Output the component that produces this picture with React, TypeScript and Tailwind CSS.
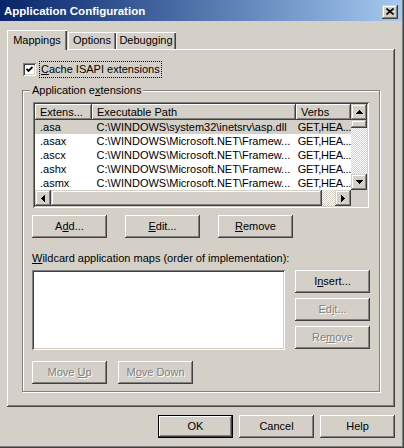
import React from 'react';

const raised =
  'shadow-[inset_-1px_-1px_#404040,inset_1px_1px_#fff,inset_-2px_-2px_#808080]';
const scrollRaised =
  'shadow-[inset_-1px_-1px_#404040,inset_1px_1px_#d4d0c8,inset_-2px_-2px_#808080,inset_2px_2px_#fff]';
const sunken =
  'shadow-[inset_1px_1px_#808080,inset_-1px_-1px_#fff,inset_2px_2px_#404040,inset_-2px_-2px_#d4d0c8]';
const dither =
  'bg-[repeating-conic-gradient(#fff_0_25%,#d4d0c8_0_50%)] bg-[length:2px_2px]';
const disabledText = 'text-[#808080] [text-shadow:1px_1px_0_#fff]';

const rows = [
  { ext: '.asa', path: 'C:\\WINDOWS\\system32\\inetsrv\\asp.dll', selected: true },
  { ext: '.asax', path: 'C:\\WINDOWS\\Microsoft.NET\\Framew...' },
  { ext: '.ascx', path: 'C:\\WINDOWS\\Microsoft.NET\\Framew...' },
  { ext: '.ashx', path: 'C:\\WINDOWS\\Microsoft.NET\\Framew...' },
  { ext: '.asmx', path: 'C:\\WINDOWS\\Microsoft.NET\\Framew...' },
];

const Arrow = ({ dir }: { dir: 'up' | 'down' | 'left' | 'right' }) => {
  const pts = {
    up: '3.5,0 7,4 0,4',
    down: '0,0 7,0 3.5,4',
    left: '4,0 4,7 0,3.5',
    right: '0,0 0,7 4,3.5',
  }[dir];
  const vertical = dir === 'up' || dir === 'down';
  return (
    <svg
      width={vertical ? 7 : 4}
      height={vertical ? 4 : 7}
      viewBox={vertical ? '0 0 7 4' : '0 0 4 7'}
      shapeRendering="crispEdges"
    >
      <polygon points={pts} fill="#000" />
    </svg>
  );
};

const ScrollBtn = ({ dir }: { dir: 'up' | 'down' | 'left' | 'right' }) => (
  <div className={`w-[16px] h-[16px] shrink-0 flex items-center justify-center bg-[#d4d0c8] ${scrollRaised}`}>
    <Arrow dir={dir} />
  </div>
);

const Btn = ({
  children,
  disabled,
  isDefault,
}: {
  children: React.ReactNode;
  disabled?: boolean;
  isDefault?: boolean;
}) => (
  <div
    className={`w-[75px] h-[23px] shrink-0 flex items-center justify-center bg-[#d4d0c8] ${raised} ${
      isDefault ? 'border border-black' : ''
    } ${disabled ? disabledText : 'text-black'}`}
  >
    <span className="whitespace-pre">{children}</span>
  </div>
);

const U = ({ children }: { children: React.ReactNode }) => <span className="underline">{children}</span>;

export default function App() {
  return (
    <div className="w-[404px] h-[448px] overflow-hidden bg-[#d4d0c8] pr-[2px] pb-[2px] text-[11px] leading-[13px] text-black font-['Liberation_Sans',Arial,sans-serif] shadow-[inset_-1px_-1px_#404040,inset_-2px_-2px_#808080]">
      {/* title bar */}
      <div className="h-[21px] pt-[2px] pl-[4px] pr-[4px] flex items-center justify-between bg-linear-to-r from-[#0a246a] to-[#a6caf0]">
        <span className="font-bold text-white text-[11.5px]">Application Configuration</span>
        <div className={`w-[16px] h-[14px] flex items-center justify-center bg-[#d4d0c8] ${scrollRaised}`}>
          <svg width="8" height="7" viewBox="0 0 8 7">
            <path d="M0.5 0.5 L7.5 6.5 M7.5 0.5 L0.5 6.5" stroke="#000" strokeWidth="1.6" />
          </svg>
        </div>
      </div>

      <div className="pl-[7px] pr-[7px] pt-[9px]">
        {/* tabs */}
        <div className="relative z-10 flex items-end h-[20px]">
          <div className="w-[60px] h-[20px] flex items-center justify-center bg-[#d4d0c8] shadow-[inset_1px_1px_#fff,inset_-1px_0_#404040,inset_-2px_0_#808080]">
            Mappings
          </div>
          <div className="w-[48px] h-[17px] mb-[1px] ml-[1px] flex items-center justify-center bg-[#d4d0c8] shadow-[inset_1px_1px_#fff,inset_-1px_0_#404040,inset_-2px_0_#808080]">
            Options
          </div>
          <div className="w-[60px] h-[17px] mb-[1px] flex items-center justify-center bg-[#d4d0c8] shadow-[inset_1px_1px_#fff,inset_-1px_0_#404040,inset_-2px_0_#808080]">
            Debugging
          </div>
        </div>

        {/* tab panel */}
        <div className={`-mt-[1px] h-[358px] pl-[15px] pt-[12px] bg-[#d4d0c8] ${raised}`}>
          <div className="flex items-center h-[17px]">
            <div className={`ml-[1px] w-[13px] h-[13px] p-[2px] bg-white ${sunken} flex items-center justify-center`}>
              <svg width="7" height="7" viewBox="0 0 7 7">
                <path d="M0.5 3 L2.5 5 L6.5 1" stroke="#000" strokeWidth="1.8" fill="none" />
              </svg>
            </div>
            <div className="ml-[3px] h-[17px] px-[1px] flex items-center border border-dotted border-black">
              <span>
                <U>C</U>ache ISAPI extensions
              </span>
            </div>
          </div>

          {/* group box */}
          <div className="relative mt-[12px] w-[358px] h-[302px] pl-[9px] pt-[11px] border border-[#808080] shadow-[1px_1px_#fff,inset_1px_1px_#fff]">
            <span className="absolute -top-[7px] left-[7px] px-[2px] bg-[#d4d0c8]">
              Application e<U>x</U>tensions
            </span>

            {/* list view */}
            <div className={`ml-[1px] w-[336px] h-[106px] p-[2px] bg-white ${sunken} flex`}>
              <div className="w-[316px] flex flex-col">
                <div className="flex h-[16px] bg-[#d4d0c8]">
                  <div className={`w-[57px] pl-[5px] flex items-center ${raised}`}>Extens...</div>
                  <div className={`w-[204px] pl-[5px] flex items-center ${raised}`}>Executable Path</div>
                  <div className={`flex-1 pl-[5px] flex items-center ${raised}`}>Verbs</div>
                </div>
                <div className="h-[70px] flex flex-col">
                  {rows.map((r) => (
                    <div
                      key={r.ext}
                      className={`flex h-[14px] items-center whitespace-nowrap ${r.selected ? 'bg-[#d4d0c8]' : 'bg-white'}`}
                    >
                      <div className="w-[57px] pl-[5px]">{r.ext}</div>
                      <div className="w-[204px] pl-[5px] overflow-hidden">{r.path}</div>
                      <div className="flex-1 pl-[4px] tracking-[-0.3px]">GET,HEA...</div>
                    </div>
                  ))}
                </div>
                <div className="flex h-[16px]">
                  <ScrollBtn dir="left" />
                  <div className={`w-[271px] h-[16px] bg-[#d4d0c8] ${scrollRaised}`} />
                  <div className={`flex-1 ${dither}`} />
                  <ScrollBtn dir="right" />
                </div>
              </div>
              <div className="w-[16px] flex flex-col">
                <ScrollBtn dir="up" />
                <div className={`h-[8px] bg-[#d4d0c8] ${scrollRaised}`} />
                <div className={`h-[46px] ${dither}`} />
                <ScrollBtn dir="down" />
                <div className="flex-1 bg-[#d4d0c8]" />
              </div>
            </div>

            <div className="mt-[7px] flex gap-[18px]">
              <Btn>
                A<U>d</U>d...
              </Btn>
              <Btn>
                <U>E</U>dit...
              </Btn>
              <Btn>
                <U>R</U>emove
              </Btn>
            </div>

            <div className="mt-[14px] h-[13px]">
              <U>W</U>ildcard application maps (order of implementation):
            </div>

            <div className="mt-[5px] flex">
              <div className={`w-[253px] h-[80px] bg-white ${sunken}`} />
              <div className="ml-[10px] flex flex-col gap-[5px]">
                <Btn>
                  I<U>n</U>sert...
                </Btn>
                <Btn disabled>
                  Ed<U>i</U>t...
                </Btn>
                <Btn disabled>
                  Re<U>m</U>ove
                </Btn>
              </div>
            </div>

            <div className="mt-[11px] flex gap-[11px]">
              <Btn disabled>
                {'Move '}
                <U>U</U>p
              </Btn>
              <Btn disabled>
                M<U>o</U>ve Down
              </Btn>
            </div>
          </div>
        </div>

        {/* dialog buttons */}
        <div className="mt-[8px] flex justify-end gap-[6px]">
          <Btn isDefault>OK</Btn>
          <Btn>Cancel</Btn>
          <Btn>Help</Btn>
        </div>
      </div>
    </div>
  );
}
